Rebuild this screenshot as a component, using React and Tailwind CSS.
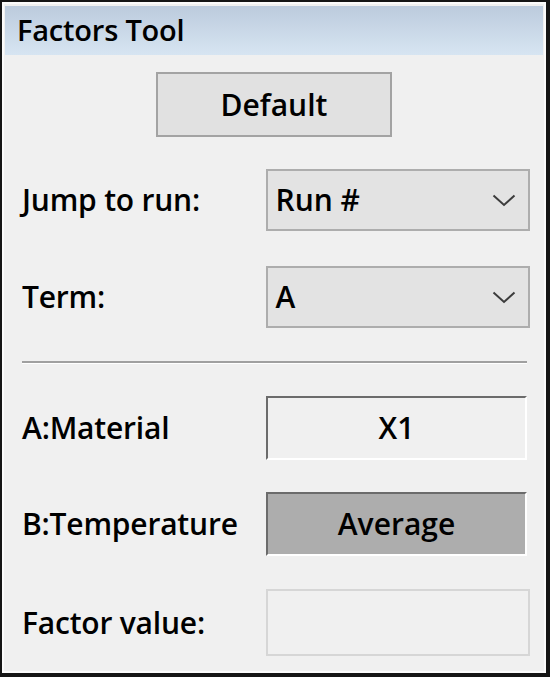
import React from "react";

const Chevron = () => (
  <svg width="24" height="13" viewBox="0 0 24 13" className="shrink-0">
    <path d="M1.5 1.5 L12 11 L22.5 1.5" fill="none" stroke="#3c3c3c" strokeWidth="2" />
  </svg>
);

const Row = ({ label, children, className = "" }) => (
  <div className={`flex items-center ${className}`}>
    <div className="w-[244px] text-[30px] font-semibold text-black leading-none tracking-[-0.2px]">{label}</div>
    {children}
  </div>
);

const Combo = ({ value }) => (
  <div className="w-[265px] h-[62px] border-2 border-[#adadad] bg-[#e3e3e3] flex items-center justify-between pl-[8px] pr-[12px]">
    <span className="text-[30px] font-semibold text-black leading-none">{value}</span>
    <Chevron />
  </div>
);

const Field = ({ value, shaded }) => (
  <div
    className={`w-[261px] h-[64px] border-2 border-t-[#6b6b6b] border-l-[#6b6b6b] border-b-white border-r-white flex items-center justify-center text-[30px] font-semibold leading-none text-black ${
      shaded ? "bg-[#adadad]" : "bg-[#f0f0f0]"
    }`}
  >
    {value}
  </div>
);

export default function App() {
  return (
    <div
      className="w-[550px] h-[677px] bg-[#151515] pl-[2px] pt-[2px] pr-[4px] pb-[4px]"
      style={{ fontFamily: '"Open Sans", "Noto Sans", sans-serif' }}
    >
      <div className="h-full border-2 border-[#fbfbfb] bg-[#f0f0f0] p-[1px] flex flex-col">
        <div className="h-[49px] mt-[1px] bg-gradient-to-b from-[#bccbdd] to-[#d7e5f2] flex items-center pl-[12px] pb-[3px]">
          <span className="text-[29px] font-semibold text-black leading-none tracking-[-0.2px]">Factors Tool</span>
        </div>

        <div className="flex flex-col pl-[17px] pr-[13px]">
          <div className="flex justify-center pr-[4px] mt-[17px]">
            <div className="w-[236px] h-[65px] border-2 border-[#a3a3a3] bg-[#e1e1e1] flex items-center justify-center text-[30px] font-semibold leading-none text-black">
              Default
            </div>
          </div>

          <Row label="Jump to run:" className="mt-[32px]">
            <Combo value="Run #" />
          </Row>

          <Row label="Term:" className="mt-[35px]">
            <Combo value="A" />
          </Row>

          <div className="mt-[33px] mr-[3px] h-[2px] bg-[#a0a0a0] border-b border-white box-content" />

          <Row label="A:Material" className="mt-[32px]">
            <Field value="X1" />
          </Row>

          <Row label="B:Temperature" className="mt-[32px]">
            <Field value="Average" shaded />
          </Row>

          <Row label="Factor value:" className="mt-[33px]">
            <div className="w-[265px] h-[67px] border-2 border-[#d6d6d6] bg-[#f0f0f0]" />
          </Row>
        </div>
      </div>
    </div>
  );
}
